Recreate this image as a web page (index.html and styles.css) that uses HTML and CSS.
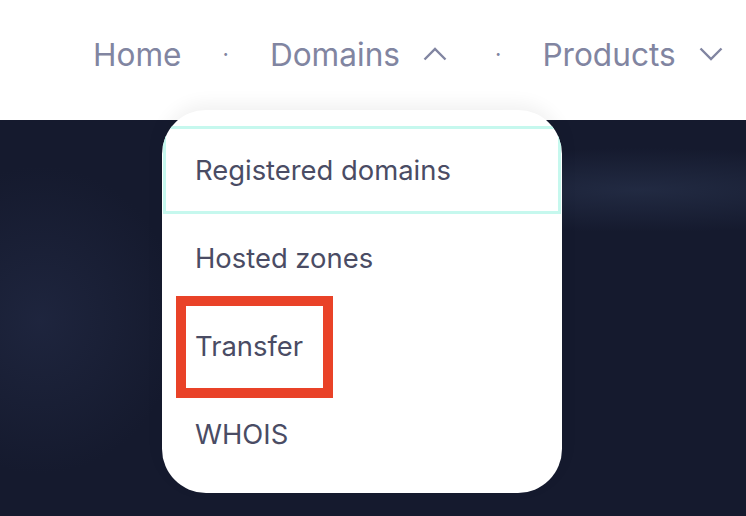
FILE: index.html
```html
<!DOCTYPE html>
<html>
<head>
<meta charset="utf-8">
<link rel="stylesheet" href="styles.css">
</head>
<body>
<header class="topbar">
  <nav class="nav">
    <a class="nav-item">Home</a>
    <span class="sep">·</span>
    <a class="nav-item">Domains
      <svg class="chev" width="24" height="14" viewBox="0 0 24 14"><path d="M1.5 12.5 L12 2 L22.5 12.5" fill="none" stroke="#8185a1" stroke-width="2.4"/></svg>
    </a>
    <span class="sep">·</span>
    <a class="nav-item">Products
      <svg class="chev" width="24" height="14" viewBox="0 0 24 14"><path d="M1.5 1.5 L12 12 L22.5 1.5" fill="none" stroke="#8185a1" stroke-width="2.4"/></svg>
    </a>
  </nav>
</header>
<main class="hero"></main>
<div class="dropdown">
  <div class="dd-item active">Registered domains</div>
  <div class="dd-item">Hosted zones</div>
  <div class="dd-item">Transfer</div>
  <div class="dd-item">WHOIS</div>
</div>
<div class="annot"></div>
</body>
</html>
```
FILE: styles.css
```css
* { box-sizing: border-box; }
html, body { margin: 0; padding: 0; }
body {
  width: 746px;
  height: 516px;
  overflow: hidden;
  font-family: "Inter", "DejaVu Sans", sans-serif;
  background: #151a2e;
  position: relative;
}
.topbar {
  height: 120px;
  background: #ffffff;
  display: flex;
  align-items: flex-start;
  padding-top: 33px;
  padding-left: 93px;
}
.nav {
  display: flex;
  align-items: center;
  height: 42px;
  color: #8185a1;
  font-size: 31.6px;
}
.nav-item {
  display: flex;
  align-items: center;
}
.chev { margin-left: 23px; margin-right: 7px; }
.sep {
  font-size: 22px;
  margin: 0 41px;
  color: #8185a1;
}
.hero {
  height: 396px;
  background:
    radial-gradient(ellipse 420px 60px at 640px 70px, rgba(46,58,86,0.5), rgba(46,58,86,0) 70%),
    radial-gradient(ellipse 200px 220px at 40px 200px, rgba(36,44,72,0.6), rgba(36,44,72,0) 70%),
    #151a2e;
}
.dropdown {
  position: absolute;
  left: 162px;
  top: 110px;
  width: 400px;
  height: 383px;
  background: #ffffff;
  border-radius: 44px;
  padding: 16px 1px 0;
  overflow: hidden;
  box-shadow: 0 -6px 18px rgba(0,0,0,0.06);
}
.dd-item {
  height: 88px;
  display: flex;
  align-items: center;
  padding-left: 32px;
  font-size: 27.4px;
  color: #4a4c64;
}
.dd-item.active {
  border: 3px solid #c6f8ee;
  padding-left: 29px;
}
.annot {
  position: absolute;
  left: 176px;
  top: 296px;
  width: 157px;
  height: 102px;
  border: 10px solid #e94228;
}
```
